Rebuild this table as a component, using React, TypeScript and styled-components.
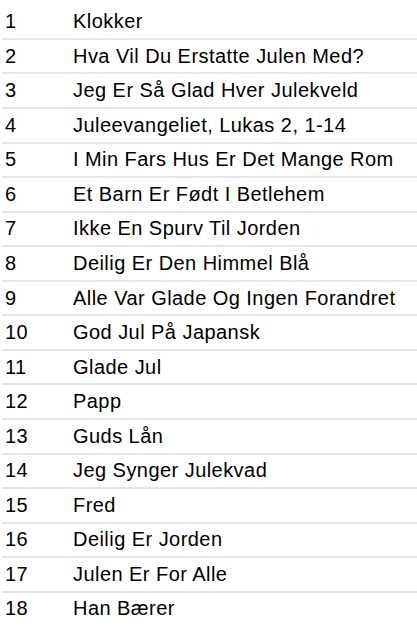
import styled, { createGlobalStyle } from 'styled-components'

const GlobalStyle = createGlobalStyle`
    body {
        margin: 0;
        background: #ffffff;
        font-family: "Liberation Sans", Arial, sans-serif;
        color: #000000;
    }
`

const tracks = [
    'Klokker',
    'Hva Vil Du Erstatte Julen Med?',
    'Jeg Er Så Glad Hver Julekveld',
    'Juleevangeliet, Lukas 2, 1-14',
    'I Min Fars Hus Er Det Mange Rom',
    'Et Barn Er Født I Betlehem',
    'Ikke En Spurv Til Jorden',
    'Deilig Er Den Himmel Blå',
    'Alle Var Glade Og Ingen Forandret',
    'God Jul På Japansk',
    'Glade Jul',
    'Papp',
    'Guds Lån',
    'Jeg Synger Julekvad',
    'Fred',
    'Deilig Er Jorden',
    'Julen Er For Alle',
    'Han Bærer',
]

const TrackList = styled.div`
    display: flex;
    flex-direction: column;
    padding: 5.4px 0 0 2px;
`

const Row = styled.div`
    display: grid;
    grid-template-columns: 68px 1fr;
    align-items: center;
    height: 32.56px;
    font-size: 20px;
    letter-spacing: 0.45px;
    border-bottom: 2px solid #e4e4e4;

    &:last-child {
        border-bottom: none;
    }
`

const Cell = styled.div`
    padding: 0 3px;
    white-space: nowrap;
`

const App = () => {
    return <>
        <GlobalStyle />
        <TrackList>
            {tracks.map((title, i) => (
                <Row key={title}>
                    <Cell>{i + 1}</Cell>
                    <Cell>{title}</Cell>
                </Row>
            ))}
        </TrackList>
    </>
}

export default App
